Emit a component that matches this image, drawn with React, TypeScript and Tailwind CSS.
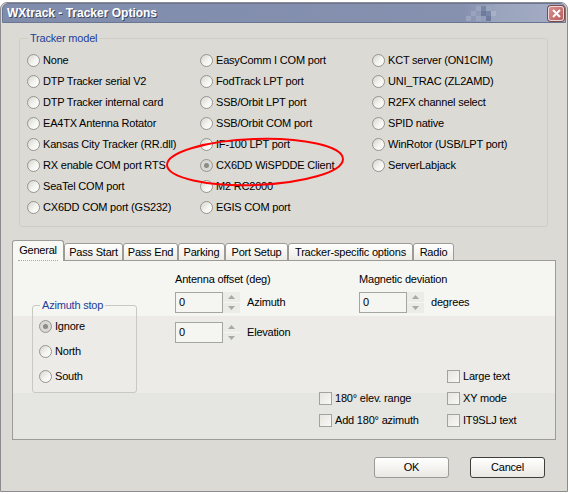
import React from "react";

const col1 = [
  "None",
  "DTP Tracker serial V2",
  "DTP Tracker internal card",
  "EA4TX Antenna Rotator",
  "Kansas City Tracker (RR.dll)",
  "RX enable COM port RTS",
  "SeaTel COM port",
  "CX6DD COM port (GS232)",
];
const col2 = [
  "EasyComm I COM port",
  "FodTrack LPT port",
  "SSB/Orbit LPT port",
  "SSB/Orbit COM port",
  "IF-100 LPT port",
  "CX6DD WiSPDDE Client",
  "M2 RC2000",
  "EGIS COM port",
];
const col3 = [
  "KCT server (ON1CIM)",
  "UNI_TRAC (ZL2AMD)",
  "R2FX channel select",
  "SPID native",
  "WinRotor (USB/LPT port)",
  "ServerLabjack",
];

const tabs = [
  { label: "Pass Start", w: "w-[59px]" },
  { label: "Pass End", w: "w-[55px]" },
  { label: "Parking", w: "w-[47px]" },
  { label: "Port Setup", w: "w-[63px]" },
  { label: "Tracker-specific options", w: "w-[125px]" },
  { label: "Radio", w: "w-[41px]" },
];

function Radio({ label, checked, h = "h-[21px]" }: { label: string; checked?: boolean; h?: string }) {
  return (
    <div className={`flex items-center gap-[3px] ${h}`}>
      <span
        className={`w-[13px] h-[13px] shrink-0 rounded-full border border-[#96958f] flex items-center justify-center ${
          checked
            ? "bg-[#d9d8d3]"
            : "bg-[linear-gradient(135deg,#d6d5cf_0%,#f4f4f0_55%,#ffffff_100%)]"
        }`}
      >
        {checked && <span className="w-[5px] h-[5px] rounded-full bg-[#8b8b87]" />}
      </span>
      <span className="whitespace-nowrap">{label}</span>
    </div>
  );
}

function Check({ label }: { label: string }) {
  return (
    <div className="flex items-center gap-[3px] h-[22px]">
      <span className="w-[13px] h-[13px] shrink-0 border border-[#a3a29d] bg-[linear-gradient(135deg,#e6e5e0,#f8f8f5)]" />
      <span className="whitespace-nowrap">{label}</span>
    </div>
  );
}

function Spinner({ label }: { label: string }) {
  return (
    <div className="flex items-center h-[21px]">
      <div className="w-[48px] h-[21px] border border-[#a5a5a1] bg-[#f5f5f2] flex items-center pl-[3px]">0</div>
      <div className="w-[17px] h-[21px] bg-[#ebebe7] flex flex-col">
        <div className="flex-1 flex items-center justify-center border-b border-[#f6f6f3]">
          <svg width="7" height="4" viewBox="0 0 7 4">
            <path d="M3.5 0 L7 4 L0 4 Z" fill="#a9a9a5" />
          </svg>
        </div>
        <div className="flex-1 flex items-center justify-center">
          <svg width="7" height="4" viewBox="0 0 7 4">
            <path d="M0 0 L7 0 L3.5 4 Z" fill="#a9a9a5" />
          </svg>
        </div>
      </div>
      <span className="ml-[7px] whitespace-nowrap">{label}</span>
    </div>
  );
}

function Checker() {
  const cells: [number, number, string][] = [
    [10, 0, "#9aa4bd"],
    [15, 0, "#7a86a6"],
    [20, 0, "#9aa4bd"],
    [5, 5, "#9aa4bd"],
    [15, 5, "#6f7b9c"],
    [20, 5, "#7a86a6"],
    [25, 5, "#a7b0c6"],
    [0, 10, "#9aa4bd"],
    [10, 10, "#9aa4bd"],
    [20, 10, "#6f7b9c"],
    [25, 10, "#9aa4bd"],
  ];
  return (
    <svg width="30" height="15" viewBox="0 0 30 15" className="shrink-0">
      {cells.map(([x, y, c], i) => (
        <rect key={i} x={x} y={y} width="5" height="5" fill={c} />
      ))}
    </svg>
  );
}

export default function App() {
  return (
    <div className="relative w-[570px] h-[494px] bg-white pt-[2px] font-['Liberation_Sans',Arial,sans-serif] text-[11px] leading-[13px] tracking-[-0.2px] text-black">
      <div className="w-[568px] h-[490px] border border-[#8b8b90] rounded-t-[7px] bg-[#dcdad5] overflow-hidden">
        {/* title bar */}
        <div className="mx-[1px] h-[20px] rounded-t-[6px] border border-[#6b7693] bg-[linear-gradient(to_right,#808cab_0%,#8591af_82%,#9aa4bd_88%,#a4adc4_100%)] flex items-center">
          <span className="pl-[4px] text-white font-bold text-[12px] tracking-normal [text-shadow:1px_1px_0_#3d4866]">
            WXtrack - Tracker Options
          </span>
          <div className="flex-1" />
          <div className="mr-[52px]">
            <Checker />
          </div>
          <div className="mr-[1px] w-[16px] h-[15px] rounded-[3px] border border-[#f0d8d8] bg-[linear-gradient(135deg,#d98f8f,#b85f5f)] flex items-center justify-center shadow-[0_0_0_1px_#7d4a4a]">
            <svg width="9" height="9" viewBox="0 0 9 9">
              <path d="M1 1 L8 8 M8 1 L1 8" stroke="#ffffff" strokeWidth="2" />
            </svg>
          </div>
        </div>

        {/* tracker model group */}
        <fieldset className="ml-[18px] mt-[9px] w-[529px] h-[195px] border border-[#cfcdc4] rounded-[3px]">
          <legend className="ml-[8px] px-[2px] text-[#21409a]">Tracker model</legend>
          <div className="flex pl-[7px] pt-[5px]">
            <div className="w-[173px] flex flex-col">
              {col1.map((l) => (
                <Radio key={l} label={l} />
              ))}
            </div>
            <div className="w-[172px] flex flex-col">
              {col2.map((l) => (
                <Radio key={l} label={l} checked={l === "CX6DD WiSPDDE Client"} />
              ))}
            </div>
            <div className="flex flex-col">
              {col3.map((l) => (
                <Radio key={l} label={l} />
              ))}
            </div>
          </div>
        </fieldset>

        {/* tabs */}
        <div className="relative z-10 ml-[11px] mt-[13px] -mb-px flex items-end h-[21px]">
          <div className="w-[52px] h-[21px] rounded-t-[3px] border border-b-0 border-[#9c9b97] bg-[#f7f7f4] flex items-start justify-center pt-[3px]">
            <span className="border-b border-dotted border-[#a8a8a4] pb-[3px] px-[1px]">General</span>
          </div>
          {tabs.map((t) => (
            <div
              key={t.label}
              className={`${t.w} h-[18px] rounded-t-[3px] border border-[#9c9b97] bg-[linear-gradient(#ffffff,#ecebe5)] flex items-center justify-center whitespace-nowrap`}
            >
              {t.label}
            </div>
          ))}
        </div>

        {/* tab panel */}
        <div className="ml-[11px] w-[544px] h-[180px] border border-[#9c9b97] bg-[linear-gradient(to_bottom,#f5f5f2_0px,#f5f5f2_55px,#ecebe7_55px,#ecebe7_132px,#e5e5e1_132px)] flex">
          <fieldset className="ml-[19px] mt-[38px] w-[105px] h-[94px] border border-[#c9c8c2] rounded-[3px] self-start">
            <legend className="ml-[7px] px-[2px] text-[#21409a]">Azimuth stop</legend>
            <div className="pl-[6px] pt-[2px] flex flex-col">
              <Radio label="Ignore" checked h="h-[25px]" />
              <Radio label="North" h="h-[25px]" />
              <Radio label="South" h="h-[25px]" />
            </div>
          </fieldset>

          <div className="ml-[38px] flex flex-col">
            <div className="flex">
              <div className="w-[184px] mt-[12px] flex flex-col">
                <div className="h-[13px] whitespace-nowrap">Antenna offset (deg)</div>
                <div className="mt-[6px]">
                  <Spinner label="Azimuth" />
                </div>
                <div className="mt-[9px]">
                  <Spinner label="Elevation" />
                </div>
              </div>
              <div className="mt-[12px] flex flex-col">
                <div className="h-[13px] whitespace-nowrap">Magnetic deviation</div>
                <div className="mt-[6px]">
                  <Spinner label="degrees" />
                </div>
              </div>
            </div>
            <div className="ml-[144px] mt-[22px] grid grid-cols-[128px_auto]">
              <div />
              <Check label="Large text" />
              <Check label="180° elev. range" />
              <Check label="XY mode" />
              <Check label="Add 180° azimuth" />
              <Check label="IT9SLJ text" />
            </div>
          </div>
        </div>

        {/* buttons */}
        <div className="ml-[373px] mt-[17px] flex gap-[21px]">
          <div className="w-[75px] h-[21px] rounded-[3px] border border-[#9a9a98] bg-[linear-gradient(#ffffff,#e9e8e2)] flex items-center justify-center">
            OK
          </div>
          <div className="w-[75px] h-[21px] rounded-[3px] border border-[#3e3e3c] bg-[linear-gradient(#ffffff,#e9e8e2)] flex items-center justify-center">
            Cancel
          </div>
        </div>
      </div>

      {/* red annotation ellipse */}
      <svg className="absolute left-[160px] top-[130px]" width="200" height="64" viewBox="0 0 200 64">
        <ellipse cx="95" cy="32" rx="88" ry="23" fill="none" stroke="#ff0000" strokeWidth="2" transform="rotate(-2 95 32)" />
      </svg>
    </div>
  );
}
